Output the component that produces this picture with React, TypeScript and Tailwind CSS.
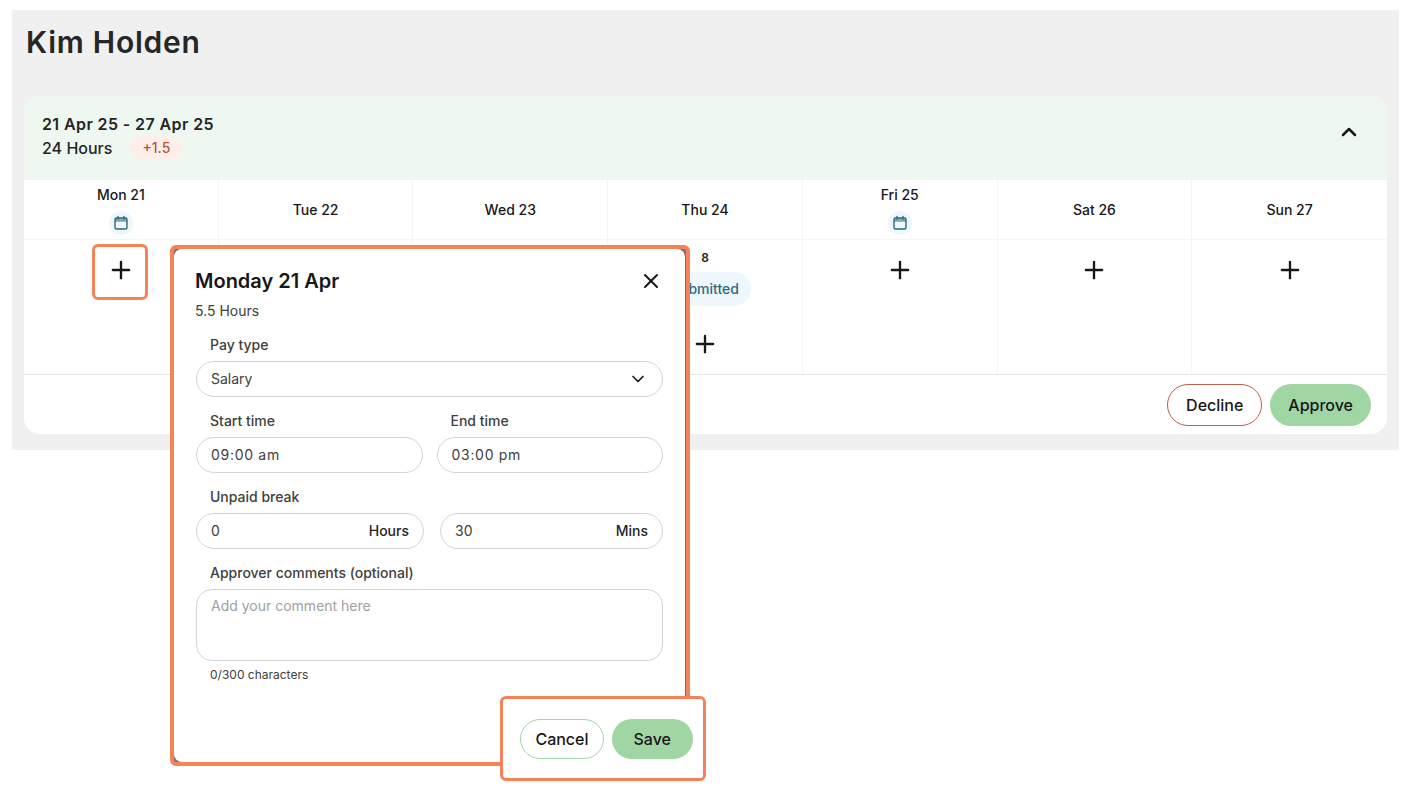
import React from 'react';
import { ChevronDown, ChevronUp, Plus, X } from 'lucide-react';

const days = [
  { label: 'Mon 21', holiday: true },
  { label: 'Tue 22' },
  { label: 'Wed 23' },
  { label: 'Thu 24' },
  { label: 'Fri 25', holiday: true },
  { label: 'Sat 26' },
  { label: 'Sun 27' },
];

const CalendarBadge = () => (
  <span className="mt-1.5 flex h-6 w-6 items-center justify-center rounded-full bg-[#eef7fb]">
    <svg viewBox="0 0 16 16" className="h-4 w-4" fill="none" stroke="#2d6a7d" strokeWidth="1.4">
      <rect x="2" y="3" width="12" height="11" rx="1.5" />
      <path d="M2 3.5h12V7H2z" fill="#2d6a7d" fillOpacity="0.55" stroke="none" />
      <path d="M5 1.5v2.5M11 1.5v2.5" strokeLinecap="round" />
      <path d="M5 6.5v1M8 6.5v1M11 6.5v1" strokeWidth="1" stroke="#ffffff" />
    </svg>
  </span>
);

const Field = ({ children, className = '' }: { children: React.ReactNode; className?: string }) => (
  <div className={`flex h-9 items-center justify-between rounded-full border border-neutral-300 bg-white px-3.5 text-sm text-neutral-700 ${className}`}>
    {children}
  </div>
);

const Label = ({ children, className = '' }: { children: React.ReactNode; className?: string }) => (
  <div className={`px-3.5 text-sm font-medium text-neutral-700 ${className}`}>{children}</div>
);

const App = () => {
  return (
    <div className="relative min-h-screen bg-white font-['Inter',sans-serif] text-neutral-900">
      <div className="ml-3 mr-3.5 pt-2.5">
        <div className="bg-[#f0f0f0] px-3 pb-4">
          <h1 className="mb-9 pl-0.5 pt-3.5 text-3xl font-semibold tracking-wide text-neutral-800">Kim Holden</h1>
          <div className="overflow-hidden rounded-2xl bg-white">
            <div className="flex h-21 justify-between bg-[#eef8f1] pl-4.5 pr-6.5 pt-4">
              <div>
                <div className="text-base font-semibold tracking-wide text-neutral-800">21 Apr 25 - 27 Apr 25</div>
                <div className="flex items-center gap-4.5 text-base font-medium text-neutral-800">
                  <span>24 Hours</span>
                  <span className="rounded-full bg-[#fdeeea] px-3 py-0.5 text-sm text-[#c0503f]">+1.5</span>
                </div>
              </div>
              <ChevronUp className="mt-2 h-6 w-6 text-neutral-900" strokeWidth={2.5} />
            </div>

            <div className="grid h-15 grid-cols-7 border-b border-neutral-100">
              {days.map((day) => (
                <div key={day.label} className="flex flex-col items-center justify-center border-r border-neutral-100 text-sm font-medium last:border-r-0">
                  <span>{day.label}</span>
                  {day.holiday && <CalendarBadge />}
                </div>
              ))}
            </div>

            <div className="grid h-33.5 grid-cols-7">
              {days.map((day) => (
                <div key={day.label} className="flex flex-col items-center border-r border-neutral-100 pt-4 last:border-r-0">
                  {day.label === 'Thu 24' ? (
                    <div className="-mt-1.5 flex flex-col items-center">
                      <span className="text-xs font-semibold">8</span>
                      <span className="mt-1.5 flex h-8.5 items-center rounded-full bg-[#eef7fb] px-3 text-sm font-medium text-[#2d6a7d]">Submitted</span>
                      <Plus className="mt-6 h-7 w-7" />
                    </div>
                  ) : (
                    <Plus className="h-7 w-7" />
                  )}
                </div>
              ))}
            </div>

            <div className="flex h-15 items-center justify-end gap-2 border-t border-neutral-200 px-4">
              <button className="h-10.5 rounded-full border border-[#c0604f] px-4.5 text-base font-medium text-neutral-900">Decline</button>
              <button className="h-10.5 rounded-full bg-[#9fd6a3] px-4.5 text-base font-medium text-neutral-900">Approve</button>
            </div>
          </div>
        </div>
      </div>

      <div className="absolute left-[92px] top-[244px] h-14 w-14 rounded-md border-3 border-[#f58258]" />

      <div className="absolute left-[170px] top-[245px] h-[521px] w-[520px] rounded-md border-4 border-[#f58258] bg-neutral-500">
        <div className="mr-px flex h-full flex-col rounded-lg bg-white px-5.5 pt-4.5">
          <div className="flex items-center justify-between">
            <h2 className="-ml-px text-xl font-semibold text-neutral-900">Monday 21 Apr</h2>
            <X className="h-6 w-6 text-neutral-900" />
          </div>
          <div className="-ml-px mt-1.5 text-sm text-neutral-700">5.5 Hours</div>

          <Label className="mb-1.5 mt-3.5">Pay type</Label>
          <Field>
            <span>Salary</span>
            <ChevronDown className="h-5 w-5 text-neutral-900" />
          </Field>

          <div className="mb-1.5 mt-3.5 grid grid-cols-2 gap-3.5">
            <Label>Start time</Label>
            <Label>End time</Label>
          </div>
          <div className="grid grid-cols-2 gap-3.5">
            <Field><span className="tracking-wider">09:00 am</span></Field>
            <Field><span className="tracking-wider">03:00 pm</span></Field>
          </div>

          <Label className="mb-1.5 mt-3.5">Unpaid break</Label>
          <div className="flex gap-4">
            <Field className="w-57">
              <span>0</span>
              <span className="font-medium text-neutral-800">Hours</span>
            </Field>
            <Field className="flex-1">
              <span>30</span>
              <span className="font-medium text-neutral-800">Mins</span>
            </Field>
          </div>

          <Label className="mb-1.5 mt-3.5">Approver comments (optional)</Label>
          <div className="h-18 rounded-2xl border border-neutral-300 px-3.5 py-1.5 text-sm text-neutral-400">Add your comment here</div>
          <div className="mt-1.5 px-3.5 text-xs text-neutral-700">0/300 characters</div>
        </div>
      </div>

      <div className="absolute left-[500px] top-[696px] flex h-[85px] w-[206px] items-center justify-end gap-2 rounded-md border-3 border-[#f58258] bg-white pr-2.5">
        <button className="h-10 rounded-full border border-[#9fd6a3] px-3.5 text-base font-medium text-neutral-900">Cancel</button>
        <button className="h-10 rounded-full bg-[#9fd6a3] px-5.5 text-base font-medium text-neutral-900">Save</button>
      </div>
    </div>
  );
};

export default App;
